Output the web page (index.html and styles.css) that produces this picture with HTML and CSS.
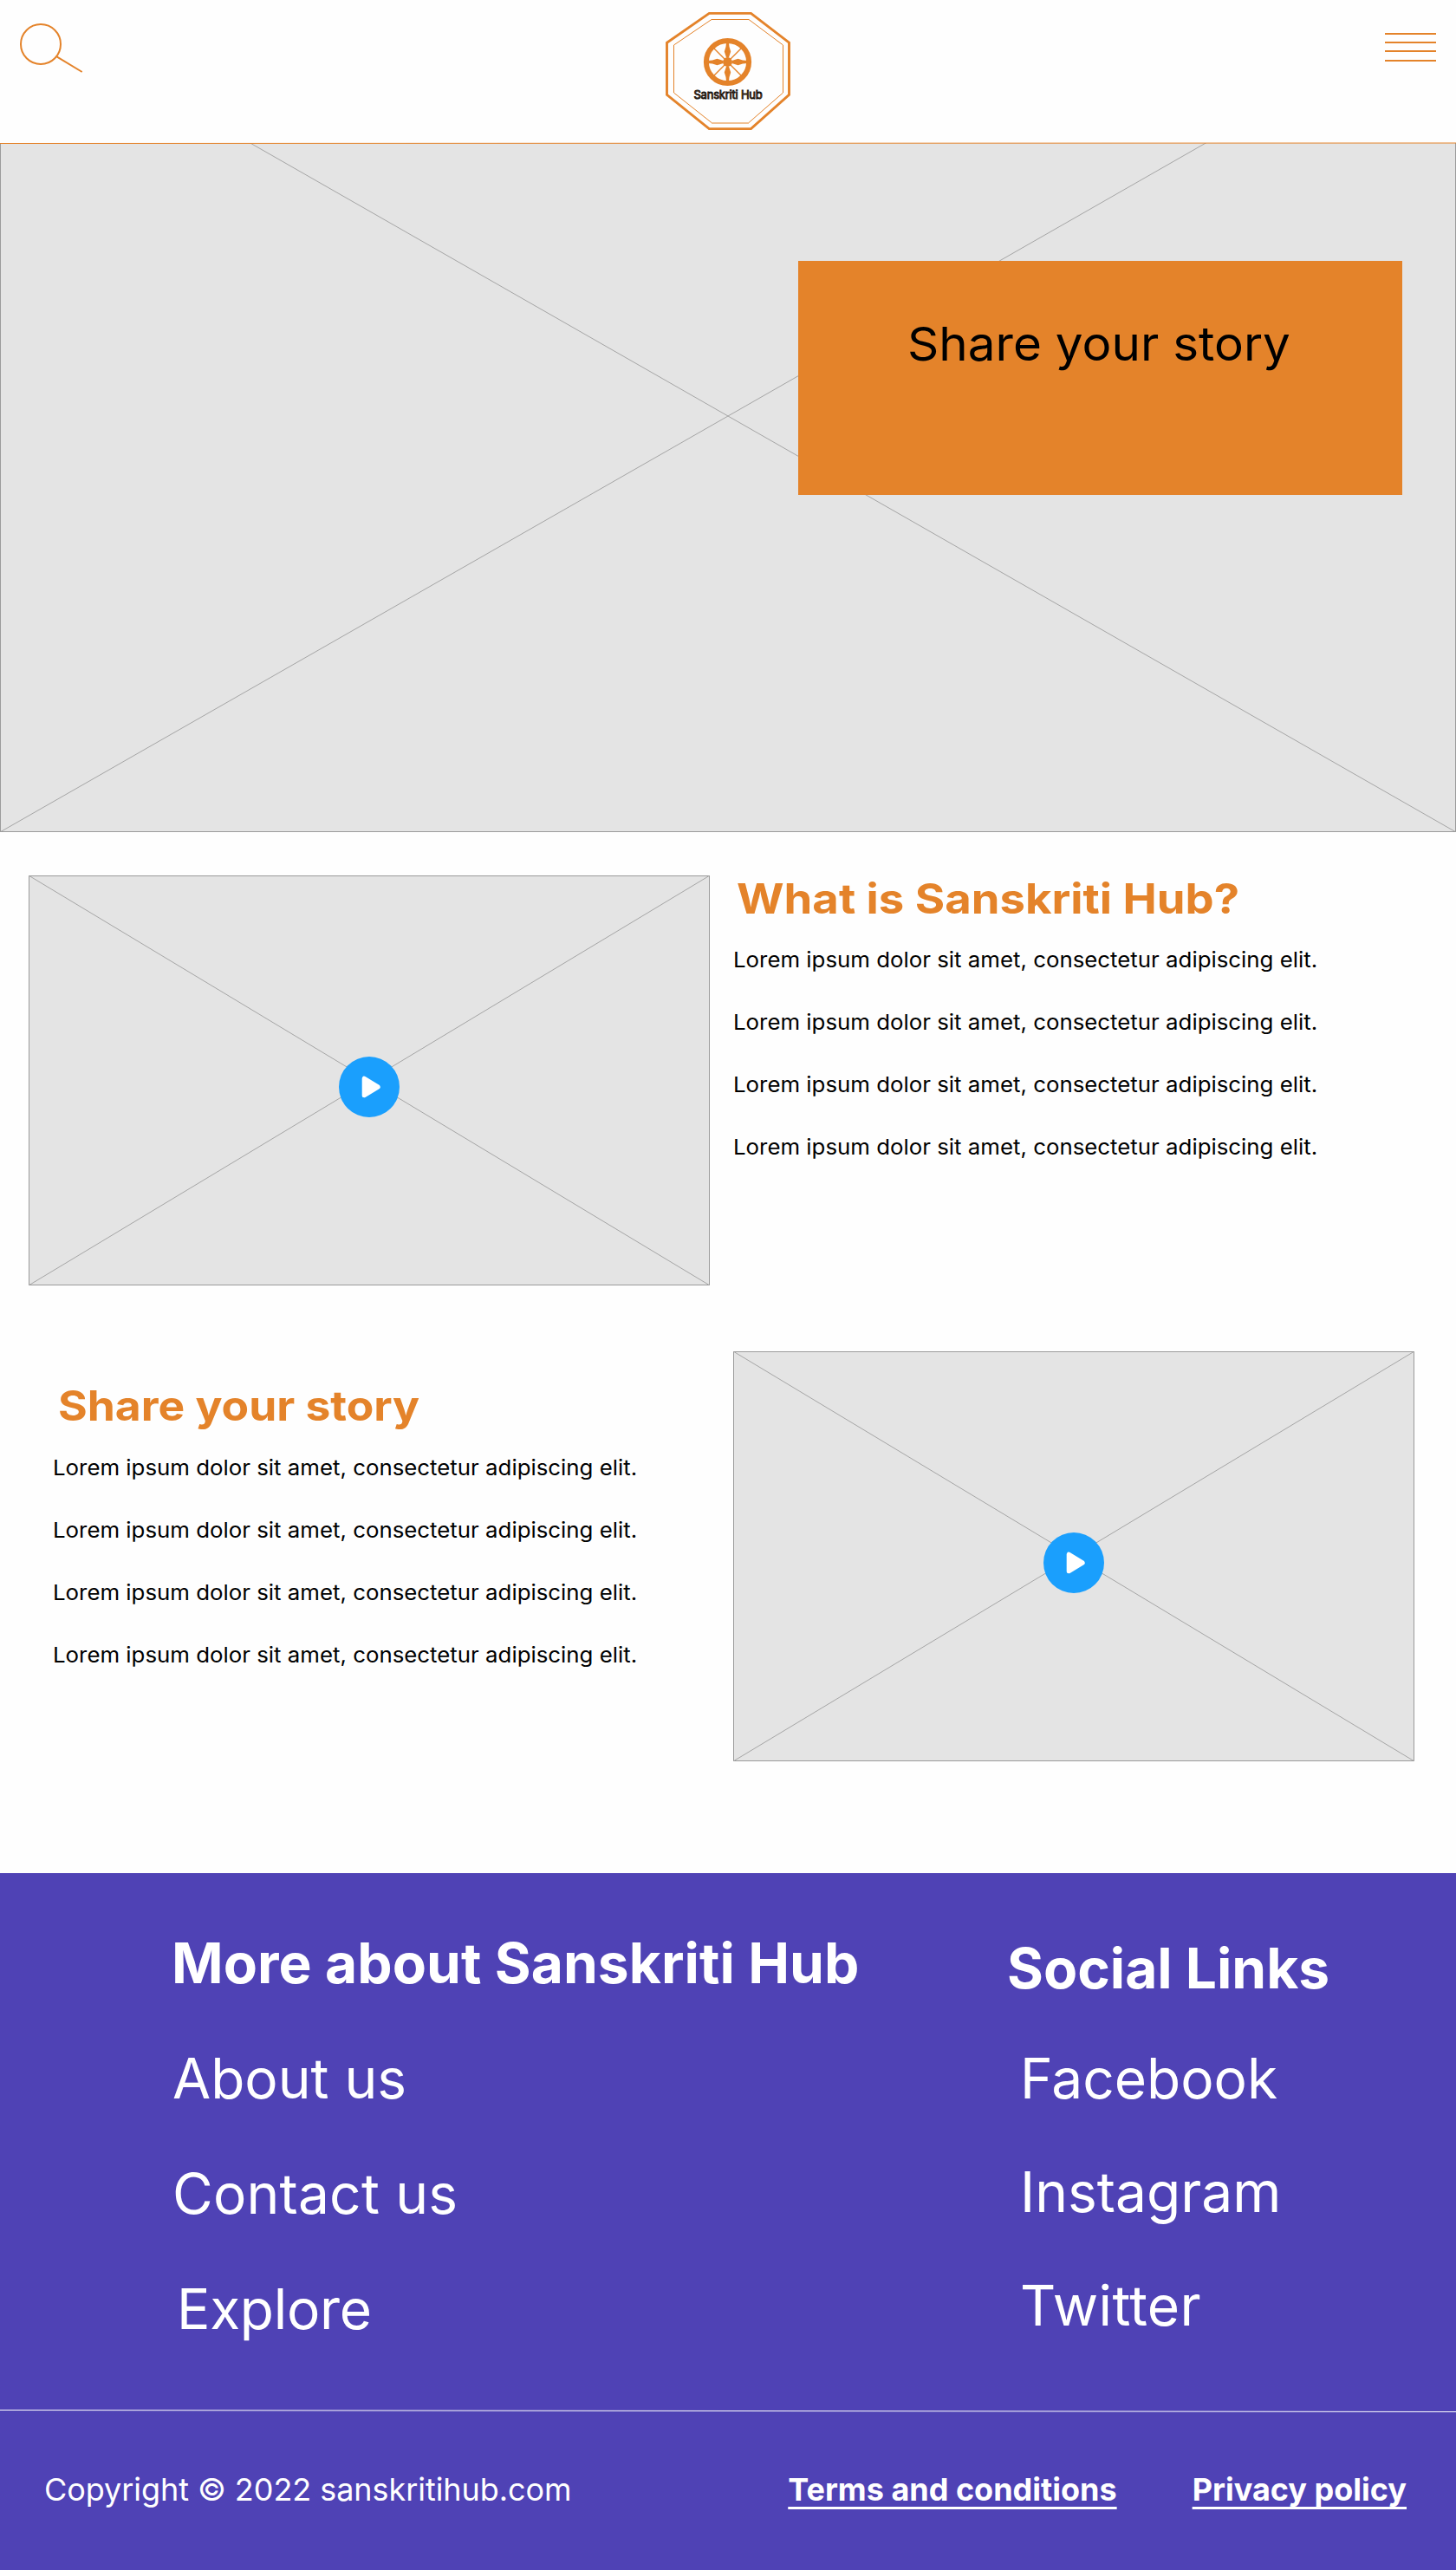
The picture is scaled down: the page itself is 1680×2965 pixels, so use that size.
FILE: index.html
```
<!DOCTYPE html>
<html lang="en">
<head>
<meta charset="utf-8">
<title>Sanskriti Hub</title>
<link rel="stylesheet" href="styles.css">
</head>
<body>
<header class="header">
  <svg class="search" width="76" height="62" viewBox="22 26 76 62" fill="none" stroke="#e4832a" stroke-width="2">
    <circle cx="47" cy="51" r="23"/><path d="M65.5 65.3 94.7 83"/>
  </svg>
  <svg class="logo" width="146" height="138" viewBox="767 13 146 138" fill="none" stroke="#e4832a">
    <path d="M818.3 15.4H866.5L910.5 49.2V109.3L866.5 148.6H818.3L769.5 109.3V49.2Z" stroke-width="2.9"/>
    <path d="M821 22.5H864L903.5 52V107L864 141.5" stroke-width="1"/>
    <path d="M821 22.5 777.5 52V107L821 141.5" stroke-width="1"/>
    <path d="M821 142H864" stroke-width="2" stroke-opacity=".5"/>
    <g transform="translate(839.5 71.5)">
      <circle r="24.6" stroke-width="6"/>
      <path d="M-16-16 16 16M16-16-16 16" stroke-width="1.4"/>
      <circle r="5.4" fill="#e4832a" stroke="none"/>
      <g fill="#e4832a" stroke="none">
        <path id="petal" d="M-1.4-23H1.4L2-17.5 3.7-12 1.4-5H-1.4L-3.7-12-2-17.5Z"/>
        <use href="#petal" transform="rotate(90)"/>
        <use href="#petal" transform="rotate(180)"/>
        <use href="#petal" transform="rotate(270)"/>
      </g>
    </g>
    <text class="logo-text" x="800.5" y="114.2">Sanskriti Hub</text>
  </svg>
  <svg class="menu" width="59" height="33" viewBox="0 0 59 33" fill="#e4832a">
    <path d="M0 0h59v2H0zM0 10h59v2H0zM0 20h59v2H0zM0 31h59v2H0z"/>
  </svg>
  <svg class="header-line" width="1680" height="3" viewBox="0 0 1680 3">
    <path d="M0 1.5 1680 1" stroke="#e4832a" stroke-width="1"/>
  </svg>
</header>

<main>
  <section class="hero">
    <svg class="hero-image" width="1680" height="795" viewBox="0 165 1680 795" fill="none" stroke="#a5a5a5">
      <path d="M0 0 1680 960M0 960 1680 0"/><path d="M.5 165V959.5H1679.5V165" stroke="#9b9b9b"/>
    </svg>
    <div class="hero-card"><h1 class="hero-title">Share your story</h1></div>
  </section>

  <section class="feature feature-about">
    <svg class="media" width="786" height="473" viewBox="0 0 786 473">
      <rect class="media-box" x=".5" y=".5" width="785" height="472"/>
      <path class="media-cross" d="M0 0 786 473M0 473 786 0"/>
      <circle cx="393" cy="244" r="35" fill="#1a9ffd"/>
      <path class="play" d="M387.2 234.2V253.8L403.2 244Z"/>
    </svg>
    <div class="copy">
      <h2 class="title title-wide">What is Sanskriti Hub?</h2>
      <p class="line">Lorem ipsum dolor sit amet, consectetur adipiscing elit.</p>
      <p class="line">Lorem ipsum dolor sit amet, consectetur adipiscing elit.</p>
      <p class="line">Lorem ipsum dolor sit amet, consectetur adipiscing elit.</p>
      <p class="line">Lorem ipsum dolor sit amet, consectetur adipiscing elit.</p>
    </div>
  </section>

  <section class="feature feature-share">
    <div class="copy">
      <h2 class="title">Share your story</h2>
      <p class="line">Lorem ipsum dolor sit amet, consectetur adipiscing elit.</p>
      <p class="line">Lorem ipsum dolor sit amet, consectetur adipiscing elit.</p>
      <p class="line">Lorem ipsum dolor sit amet, consectetur adipiscing elit.</p>
      <p class="line">Lorem ipsum dolor sit amet, consectetur adipiscing elit.</p>
    </div>
    <svg class="media" width="786" height="473" viewBox="0 0 786 473">
      <rect class="media-box" x=".5" y=".5" width="785" height="472"/>
      <path class="media-cross" d="M0 0 786 473M0 473 786 0"/>
      <circle cx="393" cy="244" r="35" fill="#1a9ffd"/>
      <path class="play" d="M387.2 234.2V253.8L403.2 244Z"/>
    </svg>
  </section>
</main>

<footer class="footer">
  <div class="footer-columns">
    <nav>
      <h3 class="footer-title title-about">More about Sanskriti Hub</h3>
      <ul class="links links-about">
        <li class="about">About us</li>
        <li class="contact">Contact us</li>
        <li class="explore">Explore</li>
      </ul>
    </nav>
    <nav class="social">
      <h3 class="footer-title">Social Links</h3>
      <ul class="links links-social">
        <li>Facebook</li>
        <li>Instagram</li>
        <li class="twitter">Twitter</li>
      </ul>
    </nav>
  </div>
  <svg class="divider" width="1680" height="4" viewBox="0 0 1680 4"><path d="M0 1.5 1680 3.5" stroke="#fff"/></svg>
  <div class="legal">
    <span class="copyright">Copyright © 2022 sanskritihub.com</span>
    <a class="legal-link">Terms and conditions</a>
    <a class="legal-link">Privacy policy</a>
  </div>
</footer>
</body>
</html>
```
FILE: styles.css
```
* { box-sizing: border-box; }
body { margin: 0; width: 1680px; background: #fefefe; color: #000; font-family: Inter, "Open Sans", sans-serif; }
h1, h2, h3, p, ul { margin: 0; padding: 0; }
svg { display: block; }

.header { position: relative; display: grid; grid-template-columns: 745px 146px 1fr; align-items: start; height: 165px; padding: 0 23px 0 22px; }
.search { margin-top: 26px; }
.logo { margin-top: 13px; }
.menu { margin-top: 38px; justify-self: end; }
.header-line { position: absolute; left: 0; top: 164px; z-index: 1; }
.logo-text { font: 400 13px Inter, sans-serif; letter-spacing: -.22px; fill: #e4832a; stroke: #111; stroke-width: .9px; }

.hero { display: grid; height: 795px; background: #e4e4e4; }
.hero-image, .hero-card { grid-area: 1 / 1; }
.hero-card { z-index: 1; justify-self: end; width: 697px; height: 270px; margin: 136px 62px 0 0; padding: 64px 0 0 126px; background: #e4832a; }
.hero-title { width: max-content; font-size: 54px; line-height: 64px; font-weight: 400; white-space: nowrap; transform: scaleX(1.048); transform-origin: left; }

.feature { display: flex; align-items: flex-start; }
.feature-about { padding: 48px 0 0 33px; gap: 27px; }
.feature-about .media { margin-top: 2px; }
.feature-share { padding: 76px 0 129px 61px; }
.feature-share .copy { width: 785px; padding-top: 34px; }
.feature-share .title { margin-bottom: 6px; }
.media { flex: none; }
.media-box { fill: #e4e4e4; stroke: #9b9b9b; }
.media-cross { stroke: #a5a5a5; }
.play { fill: #fff; stroke: #fff; stroke-width: 5px; stroke-linejoin: round; }

.title { margin: 0 0 5px 6px; font-size: 48px; line-height: 58px; font-weight: 700; color: #e4832a; white-space: nowrap; transform: scaleX(1.074); transform-origin: left; width: max-content; }
.title-wide { margin-left: 4px; transform: scaleX(1.096); }
.line { width: max-content; font-size: 24.3px; line-height: 72px; font-weight: 400; white-space: nowrap; transform: scaleX(1.063); transform-origin: left; }

.footer { background: #4f42b5; color: #fff; }
.footer-columns { display: grid; grid-template-columns: 964px auto; height: 618px; padding: 65px 0 0 198px; }
.footer-title { font-size: 64px; line-height: 78px; font-weight: 700; white-space: nowrap; }
.title-about { letter-spacing: .08px; }
.social { padding-top: 6px; }
.links { list-style: none; font-size: 64px; }
.links-about { margin-top: 27px; line-height: 133px; }
.links-social { margin: 22px 0 0 15px; line-height: 131px; }
.about { padding-left: 1px; }
.contact { padding-left: 1px; letter-spacing: .2px; }
.explore { padding-left: 6px; letter-spacing: -.3px; }
.twitter { letter-spacing: .4px; }
.legal { display: flex; height: 182px; padding: 67px 57px 0 51px; font-size: 36px; line-height: 44px; }
.copyright { margin-right: auto; letter-spacing: -.06px; }
.legal-link { font-weight: 700; text-decoration: underline 2.7px; text-underline-offset: 7px; text-decoration-skip-ink: none; }
.legal-link + .legal-link { margin-left: 87px; }
```
